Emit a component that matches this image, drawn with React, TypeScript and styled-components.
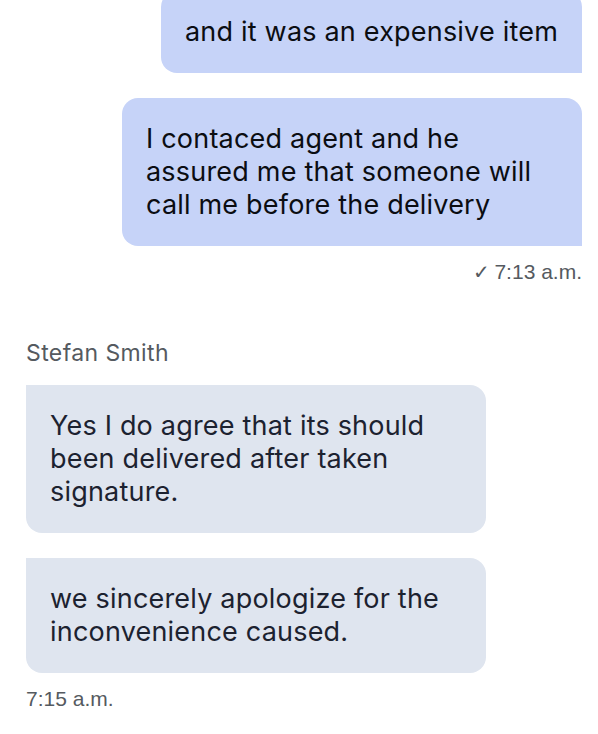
import React from "react";
import styled, { createGlobalStyle } from "styled-components";

const GlobalStyle = createGlobalStyle`
  html, body {
    margin: 0;
    padding: 0;
    background: #ffffff;
  }
  body {
    font-family: Inter, "Noto Sans", sans-serif;
    overflow: hidden;
  }
`;

const Thread = styled.div`
  display: flex;
  flex-direction: column;
  padding: 0 16px 0 26px;
  margin-top: -9px;
`;

const Group = styled.div<{ $out?: boolean }>`
  display: flex;
  flex-direction: column;
  align-items: ${(p) => (p.$out ? "flex-end" : "flex-start")};
  gap: 25px;
`;

const Bubble = styled.div<{ $out?: boolean }>`
  max-width: 460px;
  box-sizing: border-box;
  padding: 24px 24px 25px;
  font-family: Inter, "Noto Sans", sans-serif;
  font-size: 27px;
  line-height: 33px;
  letter-spacing: 0.2px;
  color: ${(p) => (p.$out ? "#0b0d12" : "#1c2230")};
  background: ${(p) => (p.$out ? "#c6d3f8" : "#dfe5ef")};
  border-radius: ${(p) => (p.$out ? "16px 16px 0 16px" : "0 16px 16px 16px")};
`;

const Meta = styled.div<{ $out?: boolean }>`
  font-family: "Liberation Sans", Arial, sans-serif;
  font-size: 21px;
  line-height: 24px;
  color: #555a60;
  align-self: ${(p) => (p.$out ? "flex-end" : "flex-start")};
  margin-top: 14px;
`;

const Check = styled.span`
  font-size: 20px;
  margin-right: 4px;
`;

const Sender = styled.div`
  font-family: Inter, "Noto Sans", sans-serif;
  font-size: 23px;
  line-height: 26px;
  letter-spacing: 0.4px;
  color: #555a60;
  margin-top: 56px;
  margin-bottom: 19px;
`;

export default function App() {
  return (
    <>
      <GlobalStyle />
      <Thread>
        <Group $out>
          <Bubble $out>and it was an expensive item</Bubble>
          <Bubble $out>
            I contaced agent and he assured me that someone will call me before the delivery
          </Bubble>
        </Group>
        <Meta $out>
          <Check>✓</Check>7:13 a.m.
        </Meta>
        <Sender>Stefan Smith</Sender>
        <Group>
          <Bubble>Yes I do agree that its should been delivered after taken signature.</Bubble>
          <Bubble>we sincerely apologize for the inconvenience caused.</Bubble>
        </Group>
        <Meta>7:15 a.m.</Meta>
      </Thread>
    </>
  );
}
